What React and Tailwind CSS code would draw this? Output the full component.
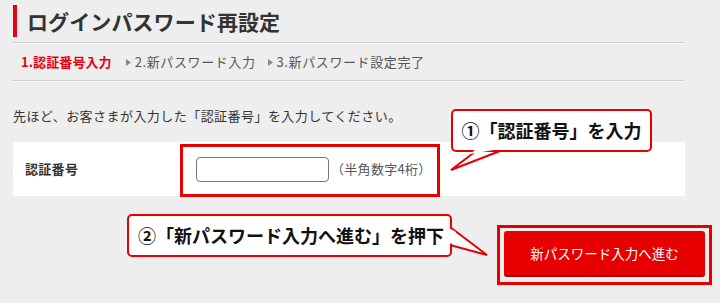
import React from "react";

const steps = [
  { label: "1.認証番号入力", active: true },
  { label: "2.新パスワード入力", active: false },
  { label: "3.新パスワード設定完了", active: false },
];

function Arrow() {
  return (
    <svg width="5" height="7" viewBox="0 0 5 7" className="mr-[4px]">
      <polygon points="0,0 5,3.5 0,7" fill="#8a8a8a" />
    </svg>
  );
}

export default function App() {
  return (
    <div
      className="relative w-[720px] h-[303px] overflow-hidden bg-[#eeeeee] text-[#333333]"
      style={{ fontFamily: '"Noto Sans CJK JP", "Noto Sans", sans-serif' }}
    >
      <div className="ml-[13px] w-[672px]">
        {/* Title */}
        <div className="pt-[5px]">
          <div className="flex h-[32px] items-center border-l-4 border-[#e60012] pl-[10px]">
            <h1 className="text-[21px] font-bold leading-none tracking-[0.1px] text-[#333]">
              ログインパスワード再設定
            </h1>
          </div>
        </div>
        <div className="mt-[5px] h-px bg-[#cfcfcf]" />
        <div className="h-px bg-[#f8f8f8]" />

        {/* Steps */}
        <div className="flex h-[36px] items-center pl-[8px] text-[13px]">
          {steps.map((s, i) => (
            <div key={s.label} className="flex items-center">
              {i > 0 && <Arrow />}
              <span
                className={
                  s.active
                    ? "mr-[14px] font-bold tracking-[0.1px] text-[#e60012]"
                    : "mr-[12px] tracking-[0.6px] text-[#555555]"
                }
              >
                {s.label}
              </span>
            </div>
          ))}
        </div>
        <div className="h-px bg-[#cfcfcf]" />
        <div className="h-px bg-[#f8f8f8]" />

        {/* Instruction */}
        <p className="mt-[24px] text-[13px] leading-[20px] tracking-[0.45px] text-[#333]">
          先ほど、お客さまが入力した「認証番号」を入力してください。
        </p>

        {/* Form row */}
        <div className="mt-[16px] flex h-[54px] items-center bg-white pl-[12px]">
          <span className="w-[171px] text-[13px] font-bold tracking-[0.3px] text-[#333]">認証番号</span>
          <input
            type="text"
            className="h-[25px] w-[133px] rounded-[4px] border border-[#777777] bg-white px-2 text-[13px] outline-none"
          />
          <span className="ml-[2px] text-[13px] tracking-[0.3px] text-[#555555]">（半角数字4桁）</span>
        </div>
      </div>

      {/* Button */}
      <div className="mt-[29px] flex justify-end pr-[8px]">
        <div className="border-[3px] border-[#e60000] px-[4px] pt-[3px] pb-[5px]">
          <button className="flex h-[46px] w-[201px] items-center justify-center rounded-[3px] border-b-2 border-[#a80000] bg-[#e60000] text-[13.5px] text-white">
            新パスワード入力へ進む
          </button>
        </div>
      </div>

      {/* Highlight around input */}
      <div className="absolute left-[180px] top-[144px] h-[53px] w-[260px] border-[3px] border-[#e60000]" />

      {/* Callout 1 */}
      <svg
        className="absolute left-[440px] top-[140px]"
        width="70"
        height="40"
        viewBox="440 140 70 40"
      >
        <polygon points="475,148 451,170 501,148" fill="#ffffff" />
        <polyline
          points="476,151 451,170 500,151"
          fill="none"
          stroke="#e60000"
          strokeWidth="2"
          strokeLinejoin="miter"
        />
      </svg>
      <div className="absolute left-[451px] top-[109px] flex h-[43px] w-[201px] items-center justify-center rounded-[5px] border-2 border-[#e60000] bg-white text-[18px] font-bold text-[#111]">
        ①「認証番号」を入力
      </div>
      <svg
        className="absolute left-[440px] top-[140px]"
        width="70"
        height="40"
        viewBox="440 140 70 40"
      >
        <polygon points="476,149 470,154 500,149" fill="#ffffff" />
      </svg>

      {/* Callout 2 */}
      <svg
        className="absolute left-[440px] top-[220px]"
        width="52"
        height="40"
        viewBox="440 220 52 40"
      >
        <polygon points="449,226 487,255 449,246" fill="#ffffff" />
        <polyline
          points="450,227 487,255 450,245"
          fill="none"
          stroke="#e60000"
          strokeWidth="2"
        />
      </svg>
      <div className="absolute left-[127px] top-[214px] flex h-[43px] w-[325px] items-center rounded-[5px] border-2 border-[#e60000] bg-white pl-[9px] text-[18px] font-bold text-[#111]">
        ②「新パスワード入力へ進む」を押下
      </div>
      <svg
        className="absolute left-[440px] top-[220px]"
        width="52"
        height="40"
        viewBox="440 220 52 40"
      >
        <polygon points="449,228 456,232 456,240 449,245" fill="#ffffff" />
      </svg>
    </div>
  );
}
